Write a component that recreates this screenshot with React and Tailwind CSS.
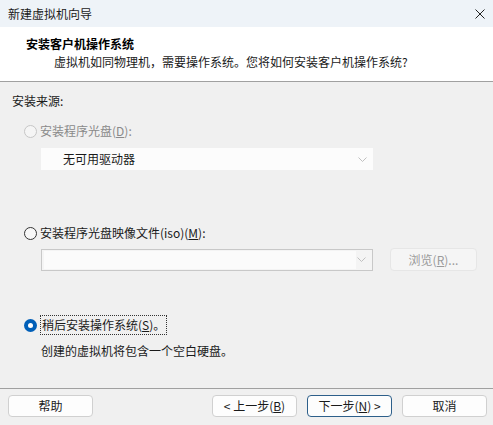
import React from 'react';

const font = { fontFamily: '"Noto Sans CJK SC", "Noto Sans", sans-serif' };

function Radio({ checked, disabled }) {
  if (checked) {
    return (
      <span className="w-[13px] h-[13px] rounded-full bg-[#005fb8] flex items-center justify-center shrink-0">
        <span className="w-[5px] h-[5px] rounded-full bg-white" />
      </span>
    );
  }
  return (
    <span
      className={`w-[13px] h-[13px] rounded-full border shrink-0 ${
        disabled ? 'border-[#c6c6c6] bg-[#f5f5f5]' : 'border-[#333] bg-[#f7f7f7]'
      }`}
    />
  );
}

function Chevron({ color = '#b0b0b0' }) {
  return (
    <svg width="9" height="5" viewBox="0 0 9 5" className="shrink-0">
      <path d="M0.5 0.5 L4.5 4.5 L8.5 0.5" fill="none" stroke={color} strokeWidth="1" />
    </svg>
  );
}

function Button({ children, primary }) {
  return (
    <div
      className={`h-[22px] w-[85px] rounded-[4px] border bg-[#fdfdfd] flex items-center justify-center text-[12px] text-[#1a1a1a] ${
        primary ? 'border-[#2d5f8a]' : 'border-[#d0d0d0]'
      }`}
    >
      {children}
    </div>
  );
}

export default function App() {
  return (
    <div className="w-[493px] h-[425px] bg-[#f0f0f0] flex flex-col overflow-hidden" style={font}>
      {/* title bar */}
      <div className="h-[27px] bg-[#eef3f8] flex items-center justify-between pl-[8px] pr-[8px]">
        <span className="text-[12px] text-[#1a1a1a]">新建虚拟机向导</span>
        <svg width="10" height="10" viewBox="0 0 10 10">
          <path d="M0.5 0.5 L9.5 9.5 M9.5 0.5 L0.5 9.5" stroke="#222" strokeWidth="1" />
        </svg>
      </div>

      {/* header */}
      <div className="h-[55px] bg-white flex flex-col pt-[8px] pl-[26px] border-b border-[#a0a0a0]">
        <span className="text-[12px] font-bold text-black leading-[18px]">安装客户机操作系统</span>
        <span className="text-[12px] text-[#1a1a1a] leading-[18px] pl-[28px]">
          虚拟机如同物理机，需要操作系统。您将如何安装客户机操作系统?
        </span>
      </div>

      {/* body */}
      <div className="flex-1 flex flex-col pl-[12px] pt-[10px] text-[12px] text-[#1a1a1a]">
        <span className="leading-[18px]">安装来源:</span>

        <div className="flex items-center gap-[3px] pl-[12px] mt-[12px] text-[#8a8a8a] leading-[18px]">
          <Radio disabled />
          <span>
            安装程序光盘(<span className="underline">D</span>):
          </span>
        </div>
        <div className="ml-[29px] mt-[8px] w-[332px] h-[22px] bg-[#fcfcfc] flex items-center justify-between pl-[22px] pr-[6px]">
          <span className="text-[#1a1a1a]">无可用驱动器</span>
          <Chevron color="#c0c0c0" />
        </div>

        <div className="flex items-center gap-[3px] pl-[12px] mt-[54px] leading-[18px]">
          <Radio />
          <span>
            安装程序光盘映像文件(iso)(<span className="underline">M</span>):
          </span>
        </div>
        <div className="flex items-center mt-[6px] ml-[29px]">
          <div className="w-[332px] h-[22px] border border-[#c8c8c8] bg-[#f4f4f4] flex items-center justify-between pr-[6px]">
            <div className="h-[18px] w-[312px] ml-[2px] bg-[#fbfbfb]" />
            <Chevron color="#c0c0c0" />
          </div>
          <div className="ml-[17px] w-[87px] h-[23px] rounded-[4px] border border-[#e6e6e6] bg-[#f5f5f5] flex items-center justify-center text-[#9a9a9a]">
            浏览(<span className="underline">R</span>)...
          </div>
        </div>

        <div className="flex items-center gap-[3px] pl-[12px] mt-[44px] leading-[18px]">
          <Radio checked />
          <span className="border border-dotted border-[#333] px-[1px] leading-[18px]">
            稍后安装操作系统(<span className="underline">S</span>)。
          </span>
        </div>
        <span className="pl-[29px] mt-[7px] leading-[18px]">创建的虚拟机将包含一个空白硬盘。</span>
      </div>

      {/* footer */}
      <div className="h-[37px] border-t border-[#a0a0a0] flex items-center pl-[8px] pr-[6px] pb-[2px]">
        <Button>帮助</Button>
        <div className="ml-auto flex gap-[10px]">
          <Button>&lt; 上一步(<span className="underline">B</span>)</Button>
          <Button primary>下一步(<span className="underline">N</span>) &gt;</Button>
          <Button>取消</Button>
        </div>
      </div>
    </div>
  );
}
